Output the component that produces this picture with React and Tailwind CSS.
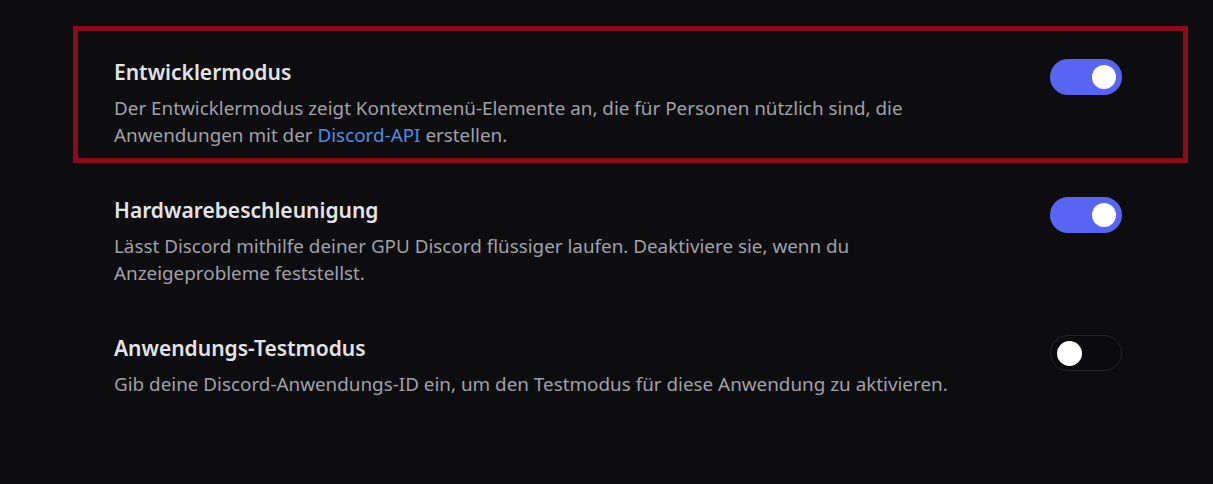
import React from "react";

function Toggle({ on }) {
  if (on) {
    return (
      <div className="mt-px flex h-[36px] w-[72px] shrink-0 items-center justify-end rounded-full bg-[#5865f2] pr-[6px]">
        <div className="h-[24px] w-[24px] rounded-full bg-white" />
      </div>
    );
  }
  return (
    <div className="mt-px flex h-[36px] w-[72px] shrink-0 items-center justify-start rounded-full border border-[#26262b] bg-[#0b0b0d] pl-[6px]">
      <div className="h-[25px] w-[25px] rounded-full bg-white" />
    </div>
  );
}

function Row({ title, children, on }) {
  return (
    <div className="flex items-start justify-between">
      <div className="flex flex-col">
        <div className="text-[21px] font-semibold leading-[28px] text-[#e4e4e7]">{title}</div>
        <div className="mt-[9px] whitespace-nowrap text-[18.85px] leading-[27px] text-[#a1a1a8]">
          {children}
        </div>
      </div>
      <Toggle on={on} />
    </div>
  );
}

export default function App() {
  return (
    <div
      className="h-[484px] w-full overflow-hidden bg-[#0d0d10] pl-[73px] pr-[25px] pt-[26px]"
      style={{ fontFamily: '"Noto Sans", "Open Sans", sans-serif' }}
    >
      <div className="border-[5px] border-[#8a0c1a] pb-[9px] pl-[36px] pr-[61px] pt-[27px]">
        <Row title="Entwicklermodus" on>
          Der Entwicklermodus zeigt Kontextmenü-Elemente an, die für Personen nützlich sind, die
          <br />
          Anwendungen mit der <span className="text-[#4a90e2]">Discord-API</span> erstellen.
        </Row>
      </div>
      <div className="mt-[33px] pl-[41px] pr-[66px]">
        <Row title="Hardwarebeschleunigung" on>
          Lässt Discord mithilfe deiner GPU Discord flüssiger laufen. Deaktiviere sie, wenn du
          <br />
          Anzeigeprobleme feststellst.
        </Row>
      </div>
      <div className="mt-[47px] pl-[41px] pr-[66px]">
        <Row title="Anwendungs-Testmodus" on={false}>
          Gib deine Discord-Anwendungs-ID ein, um den Testmodus für diese Anwendung zu aktivieren.
        </Row>
      </div>
    </div>
  );
}
